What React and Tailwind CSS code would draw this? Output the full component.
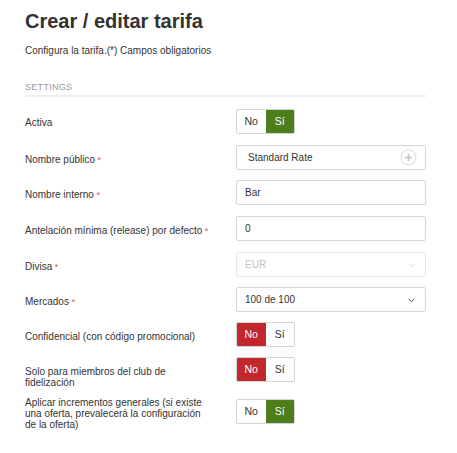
import React from "react";

const font = { fontFamily: '"Liberation Sans", Arial, sans-serif' };

function Toggle({ value }) {
  const yes = value === "yes";
  return (
    <div className="flex h-[25px] w-[59px] rounded-[2px] border border-[#d4d4d4] overflow-hidden text-[10.5px] bg-white">
      <div
        className={
          "flex-1 flex items-center justify-center " +
          (!yes ? "bg-[#c1272d] text-white" : "text-[#333]")
        }
      >
        No
      </div>
      <div
        className={
          "flex-1 flex items-center justify-center " +
          (yes ? "bg-[#4e7d1c] text-white" : "text-[#333]")
        }
      >
        Sí
      </div>
    </div>
  );
}

function Box({ children, className = "" }) {
  return (
    <div
      className={
        "relative flex items-center h-[25px] w-[190px] rounded-[2px] border border-[#d6d6d6] bg-white text-[10px] " +
        className
      }
    >
      {children}
    </div>
  );
}

function Chevron({ color }) {
  return (
    <svg
      className="absolute right-[10px] top-[10px]"
      width="7"
      height="5"
      viewBox="0 0 7 5"
      fill="none"
    >
      <path d="M0.8 1 L3.5 3.7 L6.2 1" stroke={color} strokeWidth="1" />
    </svg>
  );
}

function Label({ children, req, className = "" }) {
  return (
    <div className={"w-[211px] shrink-0 pr-[25px] text-[10px] leading-[11px] text-[#333] " + className}>
      {children}
      {req && <span className="text-[#d9534f] text-[9px]"> *</span>}
    </div>
  );
}

export default function App() {
  return (
    <div className="bg-white w-[457px] h-[453px] pl-[25px] pr-[31px]" style={font}>
      <h1 className="pt-[9px] text-[20px] leading-[24px] font-bold text-[#333]">
        Crear / editar tarifa
      </h1>
      <p className="mt-[12px] text-[10px] leading-[12px] text-[#333]">
        Configura la tarifa.(*) Campos obligatorios
      </p>
      <div className="mt-[25px] text-[9px] leading-[11px] text-[#999] tracking-[0.3px]">
        SETTINGS
      </div>
      <div className="mt-[2px] h-[2px] bg-[#efefef]" />

      <div className="mt-[12px] flex items-start">
        <Label className="pt-[8px]">Activa</Label>
        <Toggle value="yes" />
      </div>

      <div className="mt-[11px] flex items-start">
        <Label req className="pt-[9px]">Nombre público</Label>
        <Box className="pl-[11px] text-[#333]">
          Standard Rate
          <svg
            className="absolute right-[8px] top-[3px]"
            width="17"
            height="17"
            viewBox="0 0 17 17"
            fill="none"
          >
            <circle cx="8.5" cy="8.5" r="7.5" stroke="#d8d8d8" strokeWidth="1" />
            <path d="M8.5 5 V12 M5 8.5 H12" stroke="#c4c4c4" strokeWidth="1.6" />
          </svg>
        </Box>
      </div>

      <div className="mt-[10px] flex items-start">
        <Label req className="pt-[9px]">Nombre interno</Label>
        <Box className="pl-[8px] text-[#333]">Bar</Box>
      </div>

      <div className="mt-[11px] flex items-start">
        <Label req className="pt-[9px] pr-0">Antelación mínima (release) por defecto</Label>
        <Box className="pl-[8px] text-[#333]">0</Box>
      </div>

      <div className="mt-[11px] flex items-start">
        <Label req className="pt-[9px]">Divisa</Label>
        <Box className="pl-[8px] text-[#c4c4c4] border-[#e6e6e6]">
          EUR
          <Chevron color="#cfcfcf" />
        </Box>
      </div>

      <div className="mt-[10px] flex items-start">
        <Label req className="pt-[9px]">Mercados</Label>
        <Box className="pl-[8px] text-[#333]">
          100 de 100
          <Chevron color="#444" />
        </Box>
      </div>

      <div className="mt-[10px] flex items-start">
        <Label className="pt-[9px]">Confidencial (con código promocional)</Label>
        <Toggle value="no" />
      </div>

      <div className="mt-[10px] flex items-start">
        <Label className="pt-[9px]">Solo para miembros del club de fidelización</Label>
        <Toggle value="no" />
      </div>

      <div className="mt-[9px] flex items-start">
        <Label className="pt-[0px]">
          Aplicar incrementos generales (si existe una oferta, prevalecerá la configuración de la oferta)
        </Label>
        <div className="pt-[2px]">
          <Toggle value="yes" />
        </div>
      </div>
    </div>
  );
}
